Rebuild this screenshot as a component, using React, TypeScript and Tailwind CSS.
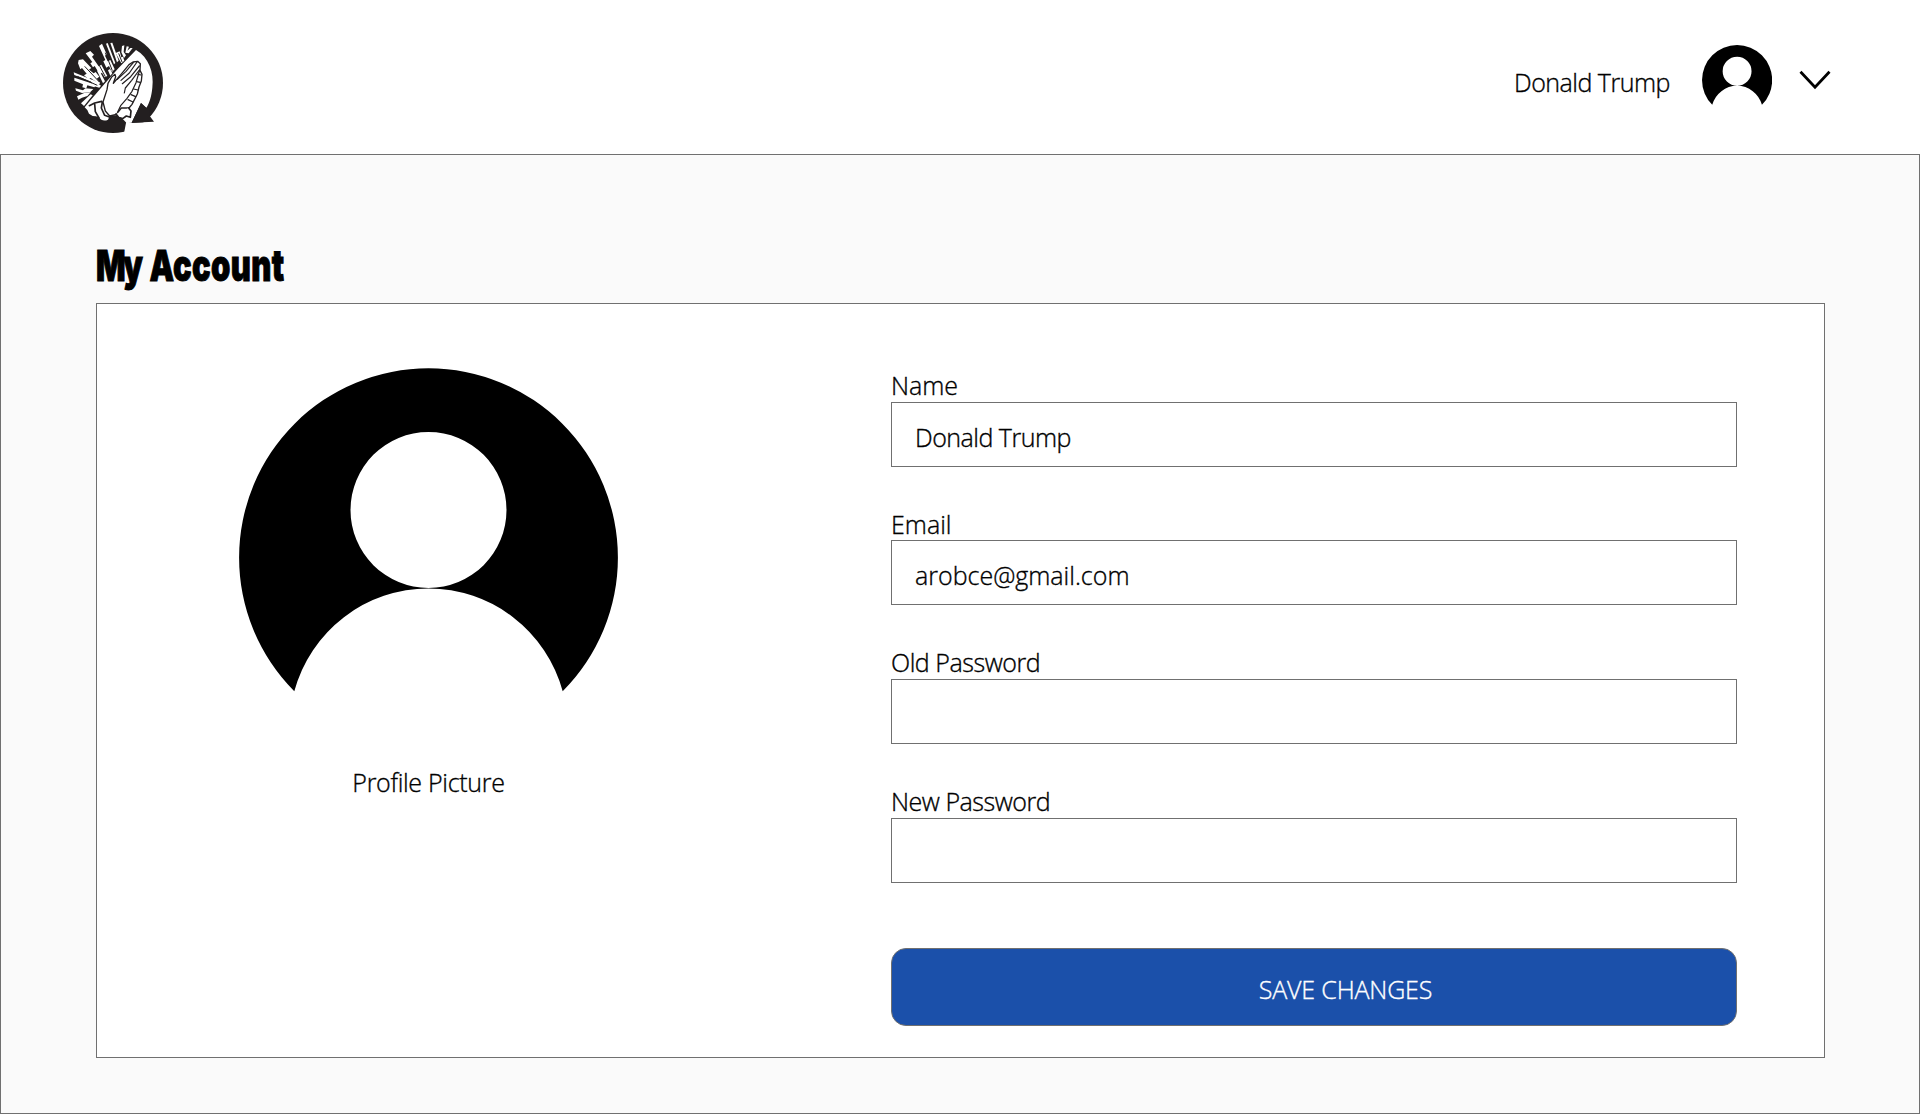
type DrawingProps = { className?: string };

function Avatar({ className }: DrawingProps) {
  return (
    <svg viewBox="0 0 379 324" className={className} aria-hidden="true">
      <path
        fillRule="evenodd"
        d="M55.3 323.3A189.4 189.4 0 1 1 323.7 323.3A139 139 0 0 0 55.3 323.3ZM189.5 64a78 78 0 1 0 0 156a78 78 0 1 0 0-156Z"
      />
    </svg>
  );
}

function Logo({ className }: DrawingProps) {
  return (
    <svg viewBox="39 39 300 300" className={className} role="img" aria-label="Praying hands logo">
      <circle cx="189" cy="189" r="150" fill="#231f20" />
      {/* opening between the ring and the arrow */}
      <path d="M221 345L229 304L245 309L312 305L340 290V345Z" fill="#fff" />
      {/* light area behind the hands */}
      <path
        d="M258 90C296 112 313 158 307 203C304 232 298 248 289 264L273 249L245 308L229 308C220 300 214 292 204 286L180 286L174 299C164 304 153 302 147 292L138 289L128 288L117 281L112 270L104 262L122 240L160 196L203 147Z"
        fill="#fff"
      />
      <path d="M273 249L245 308L312 305L297 285L302 262L289 263Z" fill="#231f20" />
      {/* rays */}
      <g fill="#fff">
        <path d="M84 130L86 120L99 118L124 144L117 149L131 160L137 156L148 170L140 176L150 188L144 190L122 174L116 178L102 166L110 161L96 144L91 148Z" />
        <path d="M107 100L121 93L132 104L126 110L146 139L154 134L172 168L164 172L156 158L149 163L134 138L129 142L121 130L127 126Z" />
        <path d="M147 78L156 71L170 103L165 107L173 124L181 120L194 148L186 156L177 138L169 143L160 124L166 120Z" />
        <path d="M168 71L173 69L196 129L192 133Z" />
        <path d="M181 69L187 68L206 122L201 127Z" />
        <path d="M197 99L209 94L214 112L219 110L223 122L214 130Z" />
        <path d="M216 78L223 76L221 96L228 106L222 114L214 97Z" />
        <path d="M230 79L237 80L232 92L241 84L248 84L236 100L226 98Z" />
        <path d="M71 157L150 189L147 194L73 165Z" />
        <path d="M73 173L138 194L133 202L112 196L109 205L97 202L99 193L73 182Z" />
        <path d="M76 205L99 211L106 205L130 207L121 216L96 219L78 212Z" />
        <path d="M81 229L104 218L122 217L112 228L96 233L85 239Z" />
        <path d="M93 250L122 223L128 226L102 258Z" />
        <path d="M122 182L127 179L153 197L148 203L130 198Z" />
        <path d="M141 152L147 150L165 184L159 190Z" />
        <path d="M174 151L180 147L187 160L181 167Z" />
      </g>
      <path
        d="M104 139L148 186M137 116L166 170M166 98L187 152M82 169L142 196M206 100L216 126"
        stroke="#231f20"
        strokeWidth="3"
      />
      <g fill="none" stroke="#231f20" strokeLinecap="round" strokeLinejoin="round">
        {/* hands */}
        <path
          d="M159 246L171 209L174 190L185 171L195 163L197 170L190 190L218 157L237 134L249 126L263 124L271 131L270 151L276 163L274 183L267 201L262 222L246 253L237 264L214 264L199 283L179 288L166 273Z"
          fill="#fff"
          strokeWidth="4"
        />
        <path d="M261 126L238 159L213 181M268 138L242 170L217 191M268 150L245 181L226 204L223 219M250 128L228 154L202 178" strokeWidth="3.6" />
        <path d="M269 150L258 188L246 214L231 235L212 257L203 276" strokeWidth="3.6" />
        <path d="M264 163L273 165M260 185L271 187M251 207L264 210M243 224L257 230M234 239L249 246" strokeWidth="3.6" />
        {/* cuffs */}
        <path d="M118 257L134 249L155 244M134 252L136 275L147 294M157 246L154 264L164 286L178 291" strokeWidth="5" />
        <path d="M198 282L207 293L218 296L229 288L241 292L243 273L236 264" fill="#fff" strokeWidth="5" />
      </g>
    </svg>
  );
}

const copy = "text-[25px] leading-[34px] font-light whitespace-nowrap [-webkit-text-stroke:0.35px_currentColor]";
const label = `block ${copy}`;
const field = `block h-[65px] w-full border border-[#707070] bg-white pt-[17px] pb-3 pl-[23px] outline-none ${copy}`;

export default function App() {
  return (
    <div className="flex h-[1114px] w-[1920px] flex-col bg-white font-['Open_Sans',sans-serif] text-black">
      <header className="flex h-[154px] shrink-0 items-start justify-between pr-[89px] pl-[63px]">
        <Logo className="mt-[33px] size-[100px]" />
        <div className="flex items-start">
          <span className={`mt-[65px] block w-[188px] tracking-[-0.5px] ${copy}`}>Donald Trump</span>
          <Avatar className="mt-[44.7px] h-[60px] w-[70.2px]" />
          <svg viewBox="0 0 32 20" className="mt-[70px] ml-[26.8px] h-5 w-8" fill="none" stroke="#000" strokeWidth="2.8">
            <path d="M1.5 1.8L16 17.2L30.5 1.8" />
          </svg>
        </div>
      </header>

      <main className="flex grow flex-col border border-[#707070] bg-[#fafafa] px-[95px]">
        <h1 className="mt-[84px] h-[64px] w-max origin-left scale-x-[0.72] font-['Inter',sans-serif] text-[43px] leading-[53px] font-black [-webkit-text-stroke:1px_#000]">
          <span className="tracking-[-4px]">My</span>
          <span className="pl-1 tracking-[0.5px]"> Account</span>
        </h1>
        <section className="flex h-[755px] w-[1729px] border border-[#707070] bg-white">
          <div className="flex w-[794px] flex-col pt-16 pl-[142px]">
            <Avatar className="h-[324px] w-[379px]" />
            <span className={`mt-[73px] w-[379px] text-center tracking-[-0.3px] ${copy}`}>Profile Picture</span>
          </div>
          <form className="w-[846px] pt-16">
            <label className={`h-[34px] ${label}`}>Name</label>
            <input className={`${field} tracking-[-0.5px]`} defaultValue="Donald Trump" />
            <label className={`mt-10 h-[33px] ${label}`}>Email</label>
            <input className={field} defaultValue="arobce@gmail.com" />
            <label className={`mt-10 h-[34px] tracking-[-0.45px] ${label}`}>Old Password</label>
            <input className={field} type="password" />
            <label className={`mt-10 h-[34px] tracking-[-0.47px] ${label}`}>New Password</label>
            <input className={field} type="password" />
            <button
              type="button"
              className={`mt-[65px] block h-[78px] w-full rounded-[15px] border border-[#707070] bg-[#1b50aa] pt-[3px] pl-[63px] text-center tracking-[-0.17px] text-white ${copy}`}
            >
              SAVE CHANGES
            </button>
          </form>
        </section>
      </main>
    </div>
  );
}
